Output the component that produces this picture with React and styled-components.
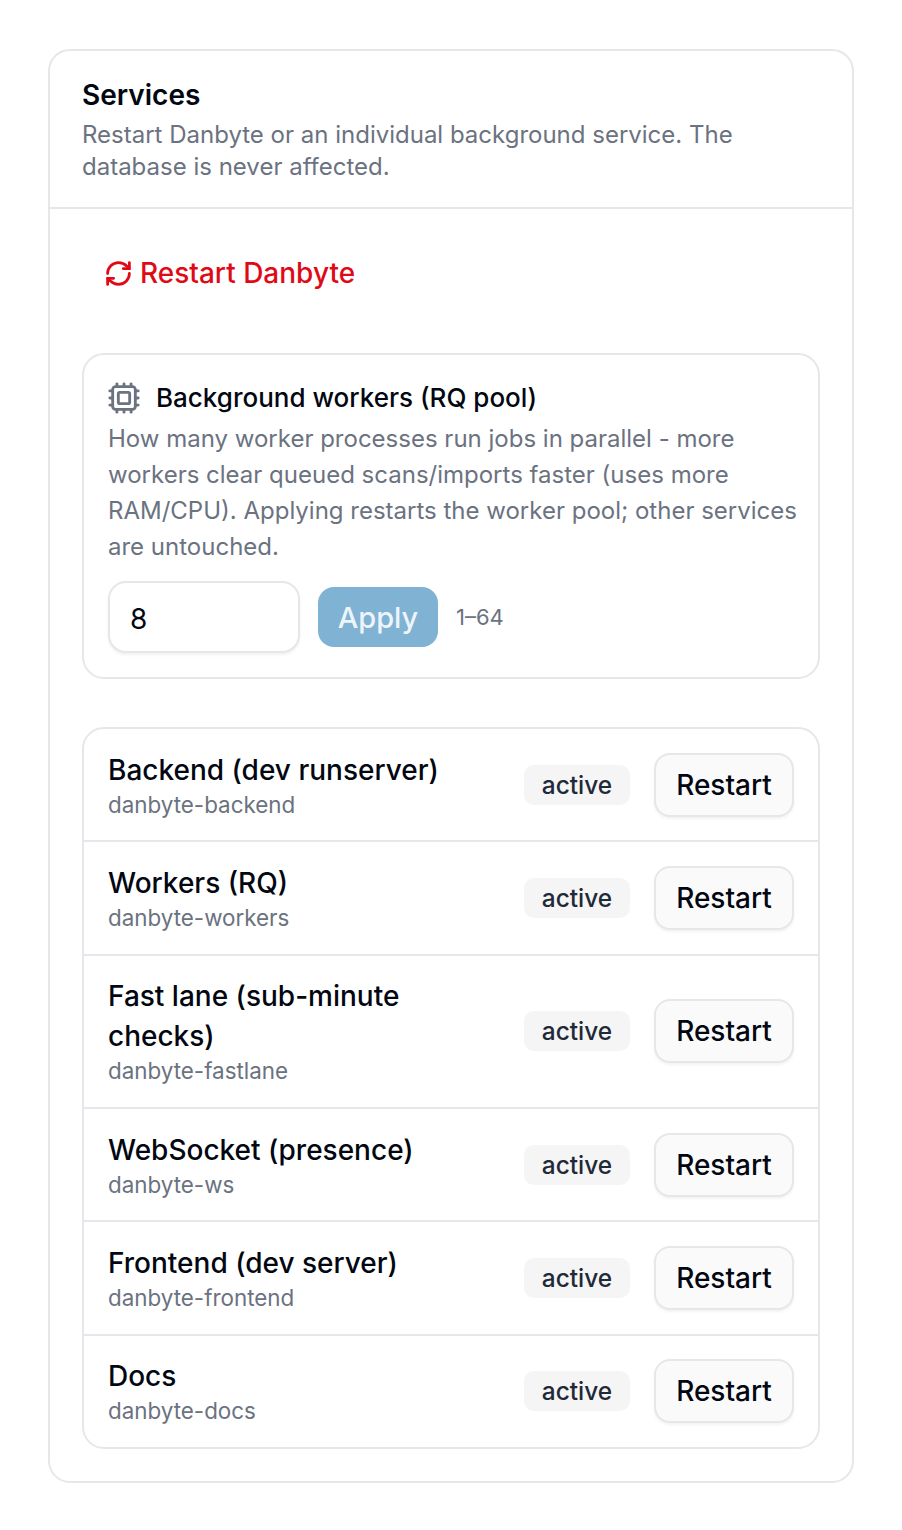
import styled, { createGlobalStyle } from "styled-components";
import { RefreshCw, Cpu } from "lucide-react";

const services = [
    { name: "Backend (dev runserver)", unit: "danbyte-backend" },
    { name: "Workers (RQ)", unit: "danbyte-workers" },
    { name: "Fast lane (sub-minute checks)", unit: "danbyte-fastlane" },
    { name: "WebSocket (presence)", unit: "danbyte-ws" },
    { name: "Frontend (dev server)", unit: "danbyte-frontend" },
    { name: "Docs", unit: "danbyte-docs" },
];

const App = () => {
    return (
        <Page>
            <GlobalStyle />
            <Card>
                <Header>
                    <Title>Services</Title>
                    <Subtitle>Restart Danbyte or an individual background service. The database is never affected.</Subtitle>
                </Header>
                <Body>
                    <RestartAll>
                        <RefreshCw size={29} strokeWidth={2.3} />
                        Restart Danbyte
                    </RestartAll>
                    <Panel>
                        <PanelTitle>
                            <ChipIcon size={34} strokeWidth={2} />
                            Background workers (RQ pool)
                        </PanelTitle>
                        <PanelText>
                            How many worker processes run jobs in parallel - more workers clear queued scans/imports faster (uses more RAM/CPU). Applying restarts the worker pool; other services are untouched.
                        </PanelText>
                        <Controls>
                            <CountInput defaultValue="8" />
                            <ApplyButton>Apply</ApplyButton>
                            <Range>1–64</Range>
                        </Controls>
                    </Panel>
                    <List>
                        {services.map((s) => (
                            <Row key={s.unit}>
                                <Info>
                                    <Name>{s.name}</Name>
                                    <Unit>{s.unit}</Unit>
                                </Info>
                                <Badge>active</Badge>
                                <RestartButton>Restart</RestartButton>
                            </Row>
                        ))}
                    </List>
                </Body>
            </Card>
        </Page>
    );
};

const GlobalStyle = createGlobalStyle`
  html, body {
    margin: 0;
    background: #fff;
    font-family: Inter, "Liberation Sans", sans-serif;
  }
`;

const Page = styled.div`
  box-sizing: border-box;
  width: 902px;
  height: 1530px;
  padding: 49px 48px;
`;

const Card = styled.section`
  border: 2px solid #e5e7eb;
  border-radius: 22px;
  background: #fff;
`;

const Header = styled.header`
  padding: 24px 32px;
  border-bottom: 2px solid #e5e7eb;
`;

const Title = styled.h2`
  margin: 0 0 4px;
  font-size: 28px;
  line-height: 40px;
  font-weight: 600;
  color: #030712;
`;

const Subtitle = styled.p`
  margin: 0;
  font-size: 24px;
  line-height: 32px;
  color: #6b7280;
`;

const Body = styled.div`
  padding: 32px;
`;

const RestartAll = styled.button`
  display: flex;
  align-items: center;
  gap: 7px;
  height: 64px;
  padding: 0 22px;
  margin-bottom: 48px;
  border: 0;
  background: none;
  font: 500 28px Inter, sans-serif;
  color: #e00a17;
`;

const Panel = styled.div`
  border: 2px solid #e5e7eb;
  border-radius: 22px;
  padding: 24px;
  margin-bottom: 48px;
`;

const PanelTitle = styled.div`
  display: flex;
  align-items: center;
  gap: 14px;
  height: 37px;
  font-size: 26px;
  font-weight: 500;
  color: #030712;
`;

const ChipIcon = styled(Cpu)`
  margin-left: -1px;
  margin-right: 1px;
  color: #6b7280;
`;

const PanelText = styled.p`
  margin: 5px -6px 16px 0;
  font-size: 24px;
  line-height: 36px;
  color: #6b7280;
`;

const Controls = styled.div`
  display: flex;
  align-items: center;
  gap: 18px;
`;

const CountInput = styled.input`
  box-sizing: border-box;
  width: 192px;
  height: 72px;
  padding: 3px 20px 0;
  border: 2px solid #e5e7eb;
  border-radius: 18px;
  box-shadow: 0 2px 3px rgba(0, 0, 0, 0.06);
  font: 400 28px Inter, sans-serif;
  color: #030712;
  outline: none;
`;

const ApplyButton = styled.button`
  width: 120px;
  height: 60px;
  border: 0;
  border-radius: 16px;
  background: #7fb2d3;
  color: #eef5fa;
  font: 500 29px Inter, sans-serif;
`;

const Range = styled.span`
  font-size: 22px;
  color: #6b7280;
`;

const List = styled.div`
  border: 2px solid #e5e7eb;
  border-radius: 22px;
`;

const Row = styled.div`
  display: flex;
  align-items: center;
  gap: 24px;
  padding: 20.67px 24px;
  & + & {
    border-top: 2px solid #e5e7eb;
  }
`;

const Info = styled.div`
  flex: 1;
  min-width: 0;
`;

const Name = styled.div`
  font-size: 28px;
  line-height: 40px;
  font-weight: 500;
  color: #030712;
`;

const Unit = styled.div`
  font-size: 22.4px;
  line-height: 30px;
  color: #6b7280;
`;

const Badge = styled.span`
  display: flex;
  align-items: center;
  justify-content: center;
  width: 106px;
  height: 40px;
  border-radius: 10px;
  background: #f5f5f6;
  font-size: 24.4px;
  font-weight: 500;
  color: #1f2937;
`;

const RestartButton = styled.button`
  width: 140px;
  height: 64px;
  border: 2px solid #e5e7eb;
  border-radius: 16px;
  background: #fafafa;
  box-shadow: 0 2px 3px rgba(0, 0, 0, 0.05);
  font: 500 28px Inter, sans-serif;
  color: #030712;
`;

export default App;
